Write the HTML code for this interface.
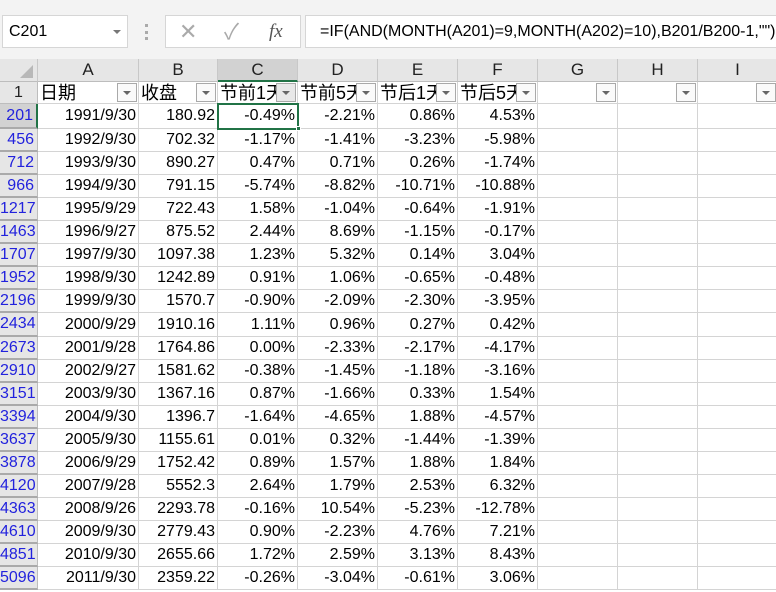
<!DOCTYPE html><html><head><meta charset="utf-8"><style>
body{margin:0;width:776px;height:592px;overflow:hidden;background:#fff;font-family:"Liberation Sans","Noto Sans CJK SC",sans-serif;position:relative}
.a{position:absolute;box-sizing:border-box}
.top{left:0;top:0;width:776px;height:59px;background:#f3f3f3}
.c{position:absolute;box-sizing:border-box;border-right:1px solid #d4d4d4;border-bottom:1px solid #d4d4d4;font-size:16px;text-align:right;padding-right:2px;white-space:nowrap;overflow:hidden;color:#000}
.h{position:absolute;box-sizing:border-box;background:#e6e6e6;border-right:1px solid #c8c8c8;border-bottom:1px solid #bdbdbd;text-align:center;font-size:17px;line-height:22px;color:#222}
.rh{position:absolute;box-sizing:border-box;left:0;width:38px;background:#e6e6e6;border-right:1px solid #bdbdbd;border-bottom:2px double #aaa;text-align:right;padding-right:3px;font-size:16px;color:#2222dd;overflow:hidden}
.dd{position:absolute;width:20px;height:19px;box-sizing:border-box;border:1px solid #a9a9a9;background:#fafafa;top:1px;right:1px;z-index:2}
.dd:after{content:"";position:absolute;left:5px;top:7px;border-left:4px solid transparent;border-right:4px solid transparent;border-top:4px solid #666}
</style></head><body>
<div class="a top"></div>
<div class="a" style="left:2px;top:15px;width:126px;height:33px;background:#fff;border:1px solid #d6d6d6;font-size:16px;line-height:31px;padding-left:6px">C201<span style="position:absolute;right:6px;top:14px;border-left:4px solid transparent;border-right:4px solid transparent;border-top:4px solid #777"></span></div>
<div class="a" style="left:145px;top:24px;width:3px;height:16px;border-left:3px dotted #aaa"></div>
<div class="a" style="left:165px;top:15px;width:136px;height:33px;background:#fff;border:1px solid #d6d6d6;color:#aaa;font-size:22px;line-height:31px"><span style="position:absolute;left:13px">✕</span><span style="position:absolute;left:58px">✓</span><span style="position:absolute;left:103px;color:#555;font-family:'Liberation Serif',serif;font-style:italic;font-size:19px">fx</span></div>
<div class="a" style="left:305px;top:15px;width:480px;height:33px;background:#fff;border:1px solid #d6d6d6;font-size:16px;line-height:31px;padding-left:14px;white-space:nowrap">=IF(AND(MONTH(A201)=9,MONTH(A202)=10),B201/B200-1,"")</div>
<div class="h" style="left:0;top:59px;width:38px;height:23px"><span style="position:absolute;right:4px;bottom:3px;border-left:13px solid transparent;border-bottom:13px solid #b8b8b8"></span></div>
<div id="g"></div>
<script>
var cols=[38,139,218,298,378,458,538,618,698,778],L="ABCDEFGHI",o="";
for(var i=0;i<9;i++){var s=i==2?"background:#d2d2d2;border-bottom:2px solid #217346;":"";o+='<div class="h" style="left:'+cols[i]+'px;top:59px;width:'+(cols[i+1]-cols[i])+'px;height:23px;'+s+'">'+L[i]+'</div>';}
o+='<div class="rh" style="top:82px;height:22px;line-height:22px;color:#222;text-align:center;border-bottom:1px solid #bdbdbd;padding:0">1</div>';
var hd=["日期","收盘","节前1天","节前5天","节后1天","节后5天","","",""];
for(var i=0;i<9;i++){o+='<div class="c" style="left:'+cols[i]+'px;top:82px;width:'+(cols[i+1]-cols[i])+'px;height:22px;text-align:left;padding-left:2px;font-size:18px;line-height:22px">'+hd[i]+'<span class="dd" '+(i==2?'style="background:#e8e8e8"':'')+'></span></div>';}
var d=[["201","1991/9/30","180.92","-0.49%","-2.21%","0.86%","4.53%"],["456","1992/9/30","702.32","-1.17%","-1.41%","-3.23%","-5.98%"],["712","1993/9/30","890.27","0.47%","0.71%","0.26%","-1.74%"],["966","1994/9/30","791.15","-5.74%","-8.82%","-10.71%","-10.88%"],["1217","1995/9/29","722.43","1.58%","-1.04%","-0.64%","-1.91%"],["1463","1996/9/27","875.52","2.44%","8.69%","-1.15%","-0.17%"],["1707","1997/9/30","1097.38","1.23%","5.32%","0.14%","3.04%"],["1952","1998/9/30","1242.89","0.91%","1.06%","-0.65%","-0.48%"],["2196","1999/9/30","1570.7","-0.90%","-2.09%","-2.30%","-3.95%"],["2434","2000/9/29","1910.16","1.11%","0.96%","0.27%","0.42%"],["2673","2001/9/28","1764.86","0.00%","-2.33%","-2.17%","-4.17%"],["2910","2002/9/27","1581.62","-0.38%","-1.45%","-1.18%","-3.16%"],["3151","2003/9/30","1367.16","0.87%","-1.66%","0.33%","1.54%"],["3394","2004/9/30","1396.7","-1.64%","-4.65%","1.88%","-4.57%"],["3637","2005/9/30","1155.61","0.01%","0.32%","-1.44%","-1.39%"],["3878","2006/9/29","1752.42","0.89%","1.57%","1.88%","1.84%"],["4120","2007/9/28","5552.3","2.64%","1.79%","2.53%","6.32%"],["4363","2008/9/26","2293.78","-0.16%","10.54%","-5.23%","-12.78%"],["4610","2009/9/30","2779.43","0.90%","-2.23%","4.76%","7.21%"],["4851","2010/9/30","2655.66","1.72%","2.59%","3.13%","8.43%"],["5096","2011/9/30","2359.22","-0.26%","-3.04%","-0.61%","3.06%"]];
function T(r){return r==0?104:Math.round(105+r*23.05+1);}
for(var r=0;r<d.length;r++){var t=T(r),t2=T(r+1),h=t2-t;
o+='<div class="rh" style="top:'+t+'px;height:'+h+'px;line-height:'+(h-2)+'px'+(r==0?';background:#d2d2d2;border-right:2px solid #217346':'')+'">'+d[r][0]+'</div>';
for(var i=0;i<9;i++){var v=i<6?d[r][i+1]:"";o+='<div class="c" style="left:'+cols[i]+'px;top:'+t+'px;width:'+(cols[i+1]-cols[i])+'px;height:'+h+'px;line-height:'+(h-1)+'px">'+v+'</div>';}}
o+='<div class="a" style="left:217px;top:103px;width:82px;height:'+(T(1)-102)+'px;border:2px solid #217346"></div><div class="a" style="left:296px;top:'+(T(1)-3)+'px;width:5px;height:5px;background:#217346;border:1px solid #fff"></div>';
document.getElementById("g").innerHTML=o;
</script></body></html>
